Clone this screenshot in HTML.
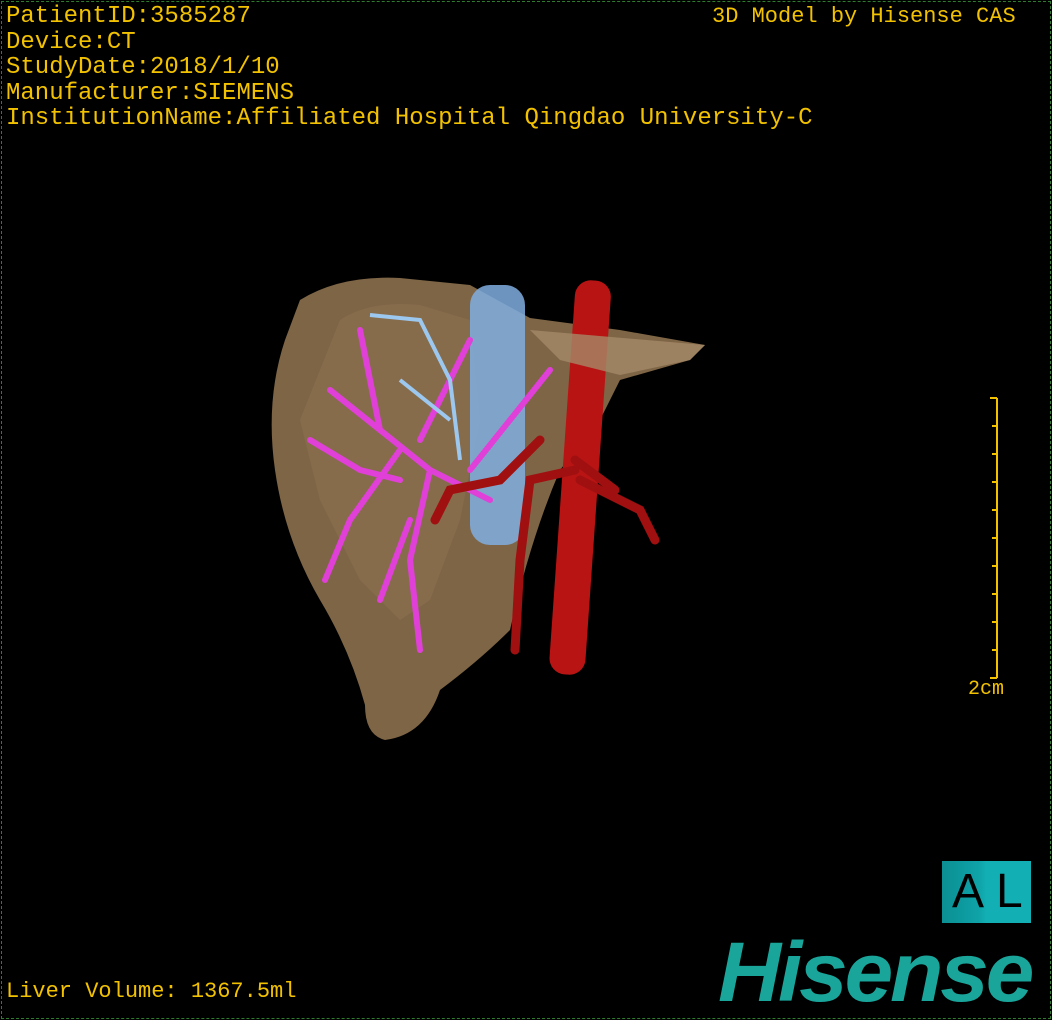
<!DOCTYPE html>
<html><head><meta charset="utf-8"><style>
html,body{margin:0;padding:0;background:#000;}
#s{position:relative;width:1052px;height:1020px;overflow:hidden;background:#000;}
#b{position:absolute;left:1px;top:1px;width:1048px;height:1016px;border:1px dashed #2e7d2e;}
.t{position:absolute;font-family:"Liberation Mono",monospace;font-size:24px;color:#f2c200;white-space:pre;line-height:25.5px;letter-spacing:0px;}
#al{position:absolute;left:942px;top:861px;width:89px;height:62px;background:linear-gradient(90deg,#0b8f93 0,#0ea3a8 42%,#12b0b4 50%,#12b0b4 100%);font-family:"Liberation Sans",sans-serif;font-size:48px;color:#000;line-height:62px;letter-spacing:12px;text-indent:10px;}
#hs{position:absolute;left:718px;top:930px;font-family:"Liberation Sans",sans-serif;font-weight:bold;font-style:italic;font-size:84px;color:#1aa59b;line-height:84px;letter-spacing:-3px;transform:scaleX(1.04);transform-origin:left top;}
</style></head><body><div id="s">
<div id="b"></div>
<div class="t" style="left:6px;top:4px">PatientID:3585287
Device:CT
StudyDate:2018/1/10
Manufacturer:SIEMENS
InstitutionName:Affiliated Hospital Qingdao University-C</div>
<div class="t" style="left:712px;top:4px;font-size:22px">3D Model by Hisense CAS</div>
<div class="t" style="left:6px;top:979px;font-size:22px">Liver Volume: 1367.5ml</div>
<div class="t" style="left:968px;top:677px;font-size:20px">2cm</div>
<svg style="position:absolute;left:0;top:0" width="1052" height="1020">
<g stroke="#f2c200" stroke-width="2">
<line x1="997" y1="398" x2="997" y2="678"/>
<line x1="990" y1="398" x2="997" y2="398"/><line x1="990" y1="678" x2="997" y2="678"/>
<line x1="992" y1="426" x2="997" y2="426"/><line x1="992" y1="454" x2="997" y2="454"/><line x1="992" y1="482" x2="997" y2="482"/><line x1="992" y1="510" x2="997" y2="510"/><line x1="992" y1="538" x2="997" y2="538"/><line x1="992" y1="566" x2="997" y2="566"/><line x1="992" y1="594" x2="997" y2="594"/><line x1="992" y1="622" x2="997" y2="622"/><line x1="992" y1="650" x2="997" y2="650"/>
</g>
<path d="M300 300 Q340 275 400 278 L470 285 L530 318 L620 330 L705 345 L690 360 L620 380 L600 420 L560 470 Q530 540 510 630 Q480 660 440 690 Q425 735 385 740 Q365 735 365 705 Q350 650 320 600 Q285 540 275 470 Q265 400 285 340 Z" fill="#7e6546"/>
<path d="M340 320 Q370 300 420 305 L470 320 L480 420 L460 520 L430 600 L400 620 L360 580 L320 500 L300 420 Z" fill="#8e7250" opacity="0.6"/>
<rect x="470" y="285" width="55" height="260" rx="20" fill="#80aee0" opacity="0.85"/>
<g stroke="#e040d8" stroke-width="6" fill="none" stroke-linecap="round">
<path d="M490 500 L430 470 L380 430 L330 390"/><path d="M430 470 L410 560 L420 650"/><path d="M400 450 L350 520 L325 580"/><path d="M380 430 L360 330"/><path d="M420 440 L470 340"/><path d="M470 470 L550 370"/><path d="M400 480 L360 470 L310 440"/><path d="M410 520 L380 600"/>
</g>
<g stroke="#9cc8f0" stroke-width="4" fill="none"><path d="M460 460 L450 380 L420 320 L370 315"/><path d="M450 420 L400 380"/></g>
<rect x="562" y="280" width="36" height="395" rx="16" fill="#b81414" transform="rotate(4 580 480)"/>
<g stroke="#a01010" stroke-width="9" fill="none" stroke-linecap="round">
<path d="M575 470 L530 480 L520 560 L515 650"/><path d="M580 480 L640 510 L655 540"/><path d="M575 460 L615 490"/><path d="M540 440 L500 480 L450 490 L435 520"/>
</g>
<path d="M705 345 L690 360 L620 375 L560 360 L530 330 Z" fill="#a58a68" opacity="0.8"/>
</svg>
<div id="al">AL</div>
<div id="hs">Hisense</div>
</div></body></html>
